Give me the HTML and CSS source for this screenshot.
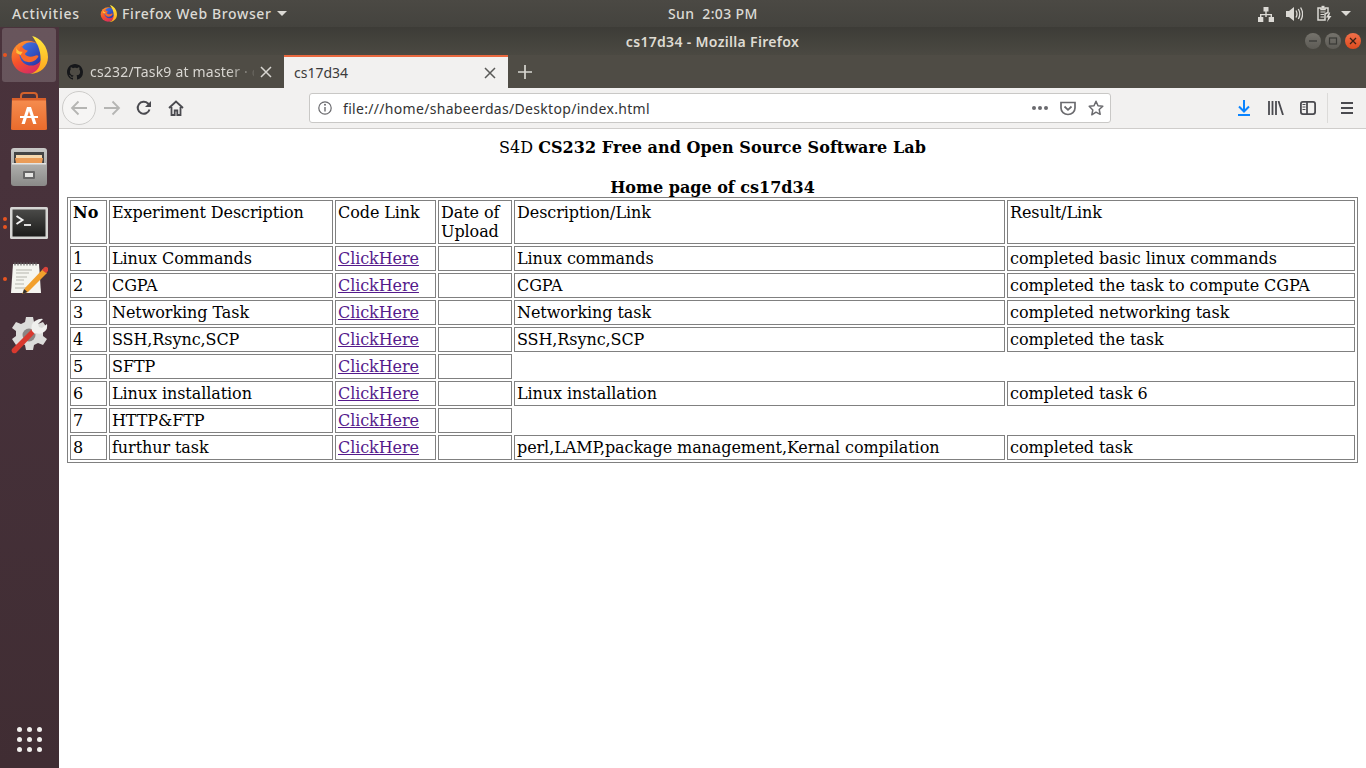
FILE: index.html
```html
<!DOCTYPE html>
<html lang="en">
<head>
<meta charset="utf-8">
<title>cs17d34 - Mozilla Firefox</title>
<link rel="stylesheet" href="styles.css">
</head>
<body>
<svg class="defs" width="0" height="0">
  <defs>
    <linearGradient id="ffbody" x1="0" y1="0" x2=".5" y2="1"><stop offset="0" stop-color="#ffa02e"/><stop offset=".6" stop-color="#f6522a"/><stop offset="1" stop-color="#d92f5e"/></linearGradient>
    <linearGradient id="fftail" x1="0" y1="0" x2="0" y2="1"><stop offset="0" stop-color="#ffe93d"/><stop offset="1" stop-color="#ffa21c"/></linearGradient>
    <linearGradient id="ffblue" x1="0" y1="0" x2="1" y2="1"><stop offset="0" stop-color="#3f7be8"/><stop offset="1" stop-color="#2a2f9e"/></linearGradient>
    <linearGradient id="bag" x1="0" y1="0" x2="0" y2="1"><stop offset="0" stop-color="#f68e50"/><stop offset="1" stop-color="#e96b2c"/></linearGradient>
    <linearGradient id="cab" x1="0" y1="0" x2="0" y2="1"><stop offset="0" stop-color="#c9c9c7"/><stop offset="1" stop-color="#8a8a88"/></linearGradient>
    <linearGradient id="term" x1="0" y1="0" x2="0" y2="1"><stop offset="0" stop-color="#4a4a48"/><stop offset="1" stop-color="#1c1c1b"/></linearGradient>
    <symbol id="firefox" viewBox="0 0 36 36">
      <circle cx="17" cy="20" r="15.500" fill="url(#ffbody)"/>
      <circle cx="20" cy="17" r="11" fill="url(#ffblue)"/>
      <path d="M21 0c8 2 15 10 15 20 0 9-7 16-17 16 7-2 10-7 10-14C29 13 26 7 21 0z" fill="url(#fftail)"/>
      <path d="M11 9c1 3 3 4 6 5l-3 3c2 3 6 3 9 2 2-1 3-1 4 0-2 5-8 7-13 5-3-2-5-6-5-10 0-2 1-4 2-5z" fill="#f8682a"/>
      <path d="M6 10c0 3 2 5 6 5l-2 3-4-2z" fill="#ffc33a"/>
    </symbol>
  </defs>
</svg>

<header class="topbar">
  <div class="top-left">
    <span class="activities">Activities</span>
    <svg class="app-icon" width="17" height="17"><use href="#firefox"/></svg>
    <span class="app-name">Firefox Web Browser</span>
    <span class="caret"></span>
  </div>
  <div class="clock">Sun&nbsp; 2:03 PM</div>
  <div class="top-right">
    <svg class="tray" width="16" height="16" viewBox="0 0 16 16"><path d="M5.500 1h5v4.500h-5zM7.300 5.500h1.400V8H14v3h-1.400V9.300H8.700V11H7.300V9.300H3.400V11H2V8h5.300zM0 11h5.300v5H0zM10.700 11H16v5h-5.300z" fill="#dcdad5"/></svg>
    <svg class="tray" width="17" height="16" viewBox="0 0 17 16"><path d="M0 5h3l5-4v14l-5-4H0z" fill="#dcdad5"/><path d="M10 4.500q2 3.500 0 7M12.300 3q3 5 0 10M14.600 1.500q4 6.500 0 13" fill="none" stroke="#dcdad5" stroke-width="1.300"/></svg>
    <svg class="tray tray-battery" width="15" height="18" viewBox="0 0 15 18"><path d="M1 3h3v1.500h4V3h3v4.500L8 9v6H1z" fill="none" stroke="#dcdad5" stroke-width="1.500"/><path d="M4.500 .8h3v3h-3z" fill="#dcdad5"/><path d="M3.500 7h5M3.500 9.500h3.500M3.500 12h3.500" stroke="#dcdad5" stroke-width="1.200"/><path d="M12 7.500l-3 5h2.200L10 17l4.500-6h-2.300l1-3.500z" fill="#dcdad5"/></svg>
    <span class="caret caret-tray"></span>
  </div>
</header>

<div class="desktop">
  <nav class="dock">
    <div class="dock-list">
      <div class="dock-item dock-active">
        <span class="pip pip-one"></span>
        <svg width="38" height="38"><use href="#firefox"/></svg>
      </div>
      <div class="dock-item">
        <svg width="36" height="40" viewBox="0 0 36 40"><path d="M10 9V5q0-3 3-3h10q3 0 3 3v4" fill="none" stroke="#d4622c" stroke-width="2"/><path d="M1 7h34l1 31q0 1-2 1H2q-2 0-2-1z" fill="url(#bag)"/><path d="M1 7h34v2.500H1z" fill="#d9602a"/><path d="M16 16h4l5.500 17h-3.300l-4.200-13-4.200 13h-3.300z" fill="#fff"/><path d="M9 25h18v2H9z" fill="#fff"/></svg>
      </div>
      <div class="dock-item">
        <svg width="36" height="38" viewBox="0 0 36 38"><rect x="0" y="0" width="36" height="38" rx="3" fill="url(#cab)"/><rect x="3" y="4" width="30" height="11" fill="#444"/><path d="M5 7h26v3H5z" fill="#f6d8ae"/><path d="M4 10h28l-1 5H5z" fill="#ea9c58"/><path d="M1 15h34v1.500H1z" fill="#e4e4e2"/><rect x="12" y="23" width="12" height="8" rx="1" fill="#666"/><rect x="14" y="25" width="8" height="4" fill="#e6e6e4"/></svg>
      </div>
      <div class="dock-item">
        <span class="pip pip-two"></span><span class="pip pip-three"></span>
        <svg width="38" height="32" viewBox="0 0 38 32"><rect x="0" y="0" width="38" height="32" rx="1.500" fill="#d6d6d4"/><rect x="2.500" y="2.500" width="33" height="27" fill="url(#term)"/><path d="M6.500 9l6 4-6 4" fill="none" stroke="#f2f2f2" stroke-width="2"/><path d="M14 18h7" stroke="#f2f2f2" stroke-width="1.800"/></svg>
      </div>
      <div class="dock-item">
        <span class="pip pip-four"></span>
        <svg width="38" height="36" viewBox="0 0 38 36"><path d="M3 3h26l2 29H1z" fill="#f5f5f0"/><path d="M5 1.500v3M8 1.500v3M11 1.500v3M14 1.500v3M17 1.500v3M20 1.500v3M23 1.500v3M26 1.500v3" stroke="#666" stroke-width="1.200"/><path d="M6 9h16M6 12h13M6 16h11M6 19h8M5 23h9M5 27h13" stroke="#b5b5ad"/><path d="M15 27L33 8l4 4-19 19-6 2z" fill="#f2a02c"/><path d="M32 9l2-2.500q2-1.500 3.500 0t.5 3.500l-2 2z" fill="#d9433a"/><path d="M12.500 33l1.500-5 3.500 3z" fill="#333"/></svg>
      </div>
      <div class="dock-item">
        <svg width="38" height="38" viewBox="0 0 38 38"><path d="M16 1h7l1 5 4 2 5-2 4 6-4 3v5l4 3-4 6-5-2-4 2-1 5h-7l-1-5-4-2-5 2-4-6 4-3v-5l-4-3 4-6 5 2 4-2z" fill="#dcdcda"/><circle cx="19" cy="19" r="6.500" fill="#8b8584"/><path d="M2 33L22 13l3.500 3.500L6 37q-3 1-4-1t0-3z" fill="#d8392f"/><path d="M22 15q-2-7 3-10t8-2l-5 5 1 3 3 1 5-4q1 5-3 8t-8 1l-1 1z" fill="#f0f0ee"/></svg>
      </div>
    </div>
    <div class="show-apps">
      <i></i><i></i><i></i><i></i><i></i><i></i><i></i><i></i><i></i>
    </div>
  </nav>

  <div class="window">
    <div class="titlebar">
      <span class="title">cs17d34 - Mozilla Firefox</span>
      <div class="win-buttons">
        <span class="win-btn"><svg width="16" height="16" viewBox="0 0 16 16"><path d="M4 8h8" stroke="#3a3a36" stroke-width="1.300"/></svg></span>
        <span class="win-btn"><svg width="16" height="16" viewBox="0 0 16 16"><rect x="4.500" y="5" width="7" height="6" fill="none" stroke="#3a3a36" stroke-width="1.200"/></svg></span>
        <span class="win-btn win-close"><svg width="16" height="16" viewBox="0 0 16 16"><path d="M5 5l6 6M11 5l-6 6" stroke="#3a2015" stroke-width="1.300"/></svg></span>
      </div>
    </div>

    <div class="tabstrip">
      <div class="tab tab-back">
        <svg class="gh" width="16" height="16" viewBox="0 0 16 16"><path d="M8 0C3.580 0 0 3.580 0 8c0 3.540 2.290 6.530 5.470 7.590.4.070.55-.17.55-.38 0-.19-.01-.82-.01-1.490-2.010.37-2.530-.49-2.690-.94-.09-.23-.48-.94-.82-1.130-.28-.15-.68-.52-.01-.53.630-.01 1.080.58 1.230.82.720 1.210 1.870.87 2.330.66.070-.52.280-.87.510-1.070-1.780-.2-3.640-.89-3.640-3.950 0-.87.310-1.590.82-2.150-.08-.2-.36-1.020.08-2.120 0 0 .67-.21 2.200.82.640-.18 1.320-.27 2-.27s1.360.09 2 .27c1.530-1.040 2.200-.82 2.200-.82.440 1.100.16 1.920.08 2.120.51.560.82 1.270.82 2.150 0 3.070-1.870 3.750-3.650 3.950.29.250.54.730.54 1.480 0 1.070-.01 1.930-.01 2.200 0 .21.150.46.550.38A8.013 8.013 0 0 0 16 8c0-4.420-3.580-8-8-8z" fill="#16171a"/></svg>
        <span class="tab-label tab-label-fade">cs232/Task9 at master · c</span>
        <svg class="tab-x" width="12" height="12" viewBox="0 0 12 12"><path d="M1 1l10 10M11 1L1 11" stroke="#d8d6d1" stroke-width="1.500"/></svg>
      </div>
      <div class="tab tab-active">
        <span class="tab-label">cs17d34</span>
        <svg class="tab-x" width="12" height="12" viewBox="0 0 12 12"><path d="M1 1l10 10M11 1L1 11" stroke="#5a5a58" stroke-width="1.500"/></svg>
      </div>
      <svg class="new-tab" width="14" height="14" viewBox="0 0 14 14"><path d="M7 0v14M0 7h14" stroke="#d8d6d1" stroke-width="1.700"/></svg>
    </div>

    <div class="toolbar">
      <span class="back-btn"><svg width="18" height="16" viewBox="0 0 18 16"><path d="M17 8H2M8.500 1.500L2 8l6.500 6.500" fill="none" stroke="#b5b5b3" stroke-width="1.800"/></svg></span>
      <svg class="tool tool-fwd" width="18" height="16" viewBox="0 0 18 16"><path d="M1 8h15M9.500 1.500L16 8l-6.500 6.500" fill="none" stroke="#b5b5b3" stroke-width="1.800"/></svg>
      <svg class="tool tool-reload" width="16" height="16" viewBox="0 0 16 16"><path d="M13.500 9.500A6 6 0 1 1 12 3.500L14 5.500" fill="none" stroke="#4a4a4f" stroke-width="2"/><path d="M15 1v6H9z" fill="#4a4a4f"/></svg>
      <svg class="tool tool-home" width="16" height="16" viewBox="0 0 16 16"><path d="M1 8l7-6.500L15 8M3.500 7v8h3.200v-4.500h2.600V15h3.200V7" fill="none" stroke="#4a4a4f" stroke-width="1.800"/></svg>
      <div class="urlbar">
        <svg class="info" width="14" height="14" viewBox="0 0 14 14"><circle cx="7" cy="7" r="6.200" fill="none" stroke="#6a6a6e" stroke-width="1.200"/><path d="M7 6v4.500" stroke="#6a6a6e" stroke-width="1.400"/><circle cx="7" cy="3.800" r="1" fill="#6a6a6e"/></svg>
        <span class="url">file:///home/shabeerdas/Desktop/index.html</span>
        <span class="meatball"><i></i><i></i><i></i></span>
        <svg class="pocket" width="16" height="16" viewBox="0 0 16 16"><path d="M1 2.500h14v5.500a7 6.500 0 0 1-14 0z" fill="none" stroke="#6a6a6e" stroke-width="1.700"/><path d="M4.500 6.500L8 9.800l3.500-3.300" fill="none" stroke="#6a6a6e" stroke-width="1.800"/></svg>
        <svg class="star" width="16" height="16" viewBox="0 0 16 16"><path d="M8 1.300l2 4.500 4.800.5-3.600 3.200 1 4.800L8 12.200l-4.200 2.600 1-4.800L1.200 6.300 6 5.800z" fill="none" stroke="#6a6a6e" stroke-width="1.500" stroke-linejoin="round"/></svg>
      </div>
      <svg class="tool tool-dl" width="14" height="16" viewBox="0 0 14 16"><path d="M7 0v11M2 6.500L7 11.500l5-5" fill="none" stroke="#0a84ff" stroke-width="2"/><path d="M1 15h12" stroke="#0a84ff" stroke-width="2"/></svg>
      <svg class="tool tool-lib" width="16" height="14" viewBox="0 0 16 14"><path d="M1 0v14M4.500 0v14M8 0v14M10.500 0l4.500 14" fill="none" stroke="#4a4a4f" stroke-width="1.800"/></svg>
      <svg class="tool tool-side" width="16" height="14" viewBox="0 0 16 14"><rect x=".9" y=".9" width="14.200" height="12.200" rx="2" fill="none" stroke="#4a4a4f" stroke-width="1.800"/><path d="M7 1v12" stroke="#4a4a4f" stroke-width="1.800"/><path d="M2.500 3.500h3M2.500 6h3M2.500 8.500h3" stroke="#4a4a4f"/></svg>
      <span class="tool-sep"></span>
      <svg class="tool tool-menu" width="12" height="12" viewBox="0 0 12 12"><path d="M0 1h12M0 6h12M0 11h12" stroke="#4a4a4f" stroke-width="1.800"/></svg>
    </div>

    <main class="page">
      <div class="course">S4D <b>CS232 Free and Open Source Software Lab</b></div>
      <div class="home"><b>Home page of cs17d34</b></div>
      <table class="lab">
        <colgroup>
          <col class="c1"><col class="c2"><col class="c3"><col class="c4"><col class="c5"><col class="c6">
        </colgroup>
        <tr><th>No</th><td>Experiment Description</td><td>Code Link</td><td>Date of Upload</td><td>Description/Link</td><td>Result/Link</td></tr>
        <tr><td>1</td><td>Linux Commands</td><td><a href="#">ClickHere</a></td><td></td><td>Linux commands</td><td>completed basic linux commands</td></tr>
        <tr><td>2</td><td>CGPA</td><td><a href="#">ClickHere</a></td><td></td><td>CGPA</td><td>completed the task to compute CGPA</td></tr>
        <tr><td>3</td><td>Networking Task</td><td><a href="#">ClickHere</a></td><td></td><td>Networking task</td><td>completed networking task</td></tr>
        <tr><td>4</td><td>SSH,Rsync,SCP</td><td><a href="#">ClickHere</a></td><td></td><td>SSH,Rsync,SCP</td><td>completed the task</td></tr>
        <tr><td>5</td><td>SFTP</td><td><a href="#">ClickHere</a></td><td></td></tr>
        <tr><td>6</td><td>Linux installation</td><td><a href="#">ClickHere</a></td><td></td><td>Linux installation</td><td>completed task 6</td></tr>
        <tr><td>7</td><td>HTTP&amp;FTP</td><td><a href="#">ClickHere</a></td><td></td></tr>
        <tr><td>8</td><td>furthur task</td><td><a href="#">ClickHere</a></td><td></td><td>perl,LAMP,package management,Kernal compilation</td><td>completed task</td></tr>
      </table>
    </main>
  </div>
</div>
</body>
</html>
```

FILE: styles.css
```css
* { box-sizing: border-box; }
html, body { margin: 0; padding: 0; height: 100%; overflow: hidden; }
body {
  width: 1366px;
  height: 768px;
  display: flex;
  flex-direction: column;
  font-family: "Noto Sans", sans-serif;
  font-size: 14px;
  background: #fff;
}
.defs { position: absolute; }

/* top bar */
.topbar {
  height: 27px;
  flex: none;
  display: flex;
  align-items: center;
  background: linear-gradient(#4b4944, #44433e);
  color: #dcdad5;
  font-weight: 500;
}
.top-left { width: 668px; display: flex; align-items: center; padding-left: 12px; flex: none; }
.activities { width: 88px; flex: none; font-size: 14px; letter-spacing: .75px; }
.app-icon { flex: none; margin-right: 5px; }
.app-name { letter-spacing: .62px; }
.caret { width: 0; height: 0; border: 5px solid transparent; border-top-color: #dcdad5; border-bottom: 0; margin-left: 5px; }
.clock { flex: none; letter-spacing: .35px; }
.top-right { margin-left: auto; display: flex; align-items: center; padding-right: 15px; }
.tray { margin-left: 12px; flex: none; }
.tray-battery { margin-left: 14px; }
.caret-tray { margin-left: 9px; }

/* desktop */
.desktop { flex: 1; display: flex; min-height: 0; }
.dock {
  width: 59px;
  flex: none;
  display: flex;
  flex-direction: column;
  justify-content: space-between;
  background: linear-gradient(#4a333c, #46313a 40%, #402d33);
}
.dock-list { display: flex; flex-direction: column; gap: 2px; padding: 1px 3px 0 2px; }
.dock-item { position: relative; height: 54px; display: flex; align-items: center; justify-content: center; border-radius: 3px; }
.dock-active { background: rgba(255, 255, 255, .17); }
.pip { position: absolute; left: 1px; width: 4px; height: 4px; border-radius: 50%; background: #e95420; }
.pip-one { top: 25px; }
.pip-two { top: 21px; }
.pip-three { top: 29px; }
.pip-four { top: 25px; }
.show-apps {
  display: grid;
  grid-template-columns: repeat(3, 5px);
  grid-auto-rows: 5px;
  gap: 5px;
  justify-content: center;
  padding: 0 1px 16px 0;
}
.show-apps i { background: #f2f0ee; border-radius: 50%; }

/* window */
.window { flex: 1; min-width: 0; display: flex; flex-direction: column; }
.titlebar {
  height: 28px;
  flex: none;
  position: relative;
  display: flex;
  align-items: center;
  justify-content: center;
  background: linear-gradient(#3d3c37, #4b4942);
}
.title { color: #dfdbd2; font-weight: 600; font-size: 14px; letter-spacing: .32px; }
.win-buttons { position: absolute; right: 5px; top: 6px; display: flex; gap: 4px; }
.win-btn {
  width: 16px; height: 16px; border-radius: 50%;
  background: linear-gradient(#75736c, #5d5b55);
  display: flex;
}
.win-close { background: linear-gradient(#f0704a, #df4b1e); }

.tabstrip { height: 33px; flex: none; display: flex; align-items: stretch; background: #4f4c45; }
.tab { width: 225px; flex: none; display: flex; align-items: center; padding: 0 12px 0 8px; color: #d8d6d1; }
.tab-active { background: #f2f1f0; border-top: 2px solid #e9683f; color: #3b3b3b; padding: 0 12px 0 10px; width: 224px; }
.gh { flex: none; margin-right: 7px; }
.tab-label { flex: 1; min-width: 0; white-space: nowrap; overflow: hidden; }
.tab-label-fade {
  letter-spacing: .2px;
  margin-right: 6px;
  -webkit-mask-image: linear-gradient(90deg, #000 84%, rgba(0, 0, 0, .15));
  mask-image: linear-gradient(90deg, #000 84%, rgba(0, 0, 0, .15));
}
.tab-x { flex: none; }
.new-tab { flex: none; margin: 10px 0 0 10px; }

.toolbar {
  height: 41px;
  flex: none;
  display: flex;
  align-items: center;
  background: #f2f1f0;
  border-bottom: 1px solid #cfcdcb;
  padding: 0 13px 0 3px;
  position: relative;
}
.back-btn {
  width: 34px; height: 34px; border-radius: 50%;
  border: 1px solid #cdccca;
  background: #f6f5f4;
  display: flex; align-items: center; justify-content: center;
  flex: none;
}
.tool { flex: none; }
.tool-fwd { margin-left: 7px; }
.tool-reload { margin-left: 15px; }
.tool-home { margin-left: 16px; }
.urlbar {
  width: 802px;
  height: 30px;
  flex: none;
  margin-left: 125px;
  display: flex;
  align-items: center;
  background: #fff;
  border: 1px solid #c9c8c6;
  border-radius: 3px;
  padding: 0 6px 0 8px;
}
.info { flex: none; margin-right: 11px; }
.url { flex: 1; color: #333; letter-spacing: .31px; }
.meatball { display: flex; gap: 2px; margin-right: 12px; }
.meatball i { width: 4px; height: 4px; border-radius: 50%; background: #6a6a6e; }
.pocket { flex: none; margin-right: 12px; }
.star { flex: none; }
.tool-dl { margin-left: 126px; }
.tool-lib { margin-left: 17px; }
.tool-side { margin-left: 16px; }
.tool-sep { width: 1px; height: 30px; background: #dcdbd9; margin-left: 11px; flex: none; }
.tool-menu { margin-left: 13px; }

/* page */
.page {
  flex: 1;
  min-height: 0;
  background: #fff;
  padding: 9px 8px 8px;
  font-family: "DejaVu Serif", serif;
  font-size: 16px;
  color: #000;
  text-align: center;
}
.course { line-height: 19px; margin-bottom: 21px; }
.course b { letter-spacing: .06px; }
.home { line-height: 19px; }
.lab {
  width: 1291px;
  table-layout: fixed;
  border: 1px solid #808080;
  border-spacing: 2px;
  text-align: left;
}
.lab td, .lab th {
  border: 1px solid #808080;
  padding: 2px;
  line-height: 19px;
  vertical-align: top;
  text-align: left;
}
.lab td { letter-spacing: -.08px; }
.c1 { width: 37px; }
.c2 { width: 224px; }
.c3 { width: 101px; }
.c4 { width: 74px; }
.c5 { width: 491px; }
.c6 { width: 348px; }
a { color: #551a8b; }
```
